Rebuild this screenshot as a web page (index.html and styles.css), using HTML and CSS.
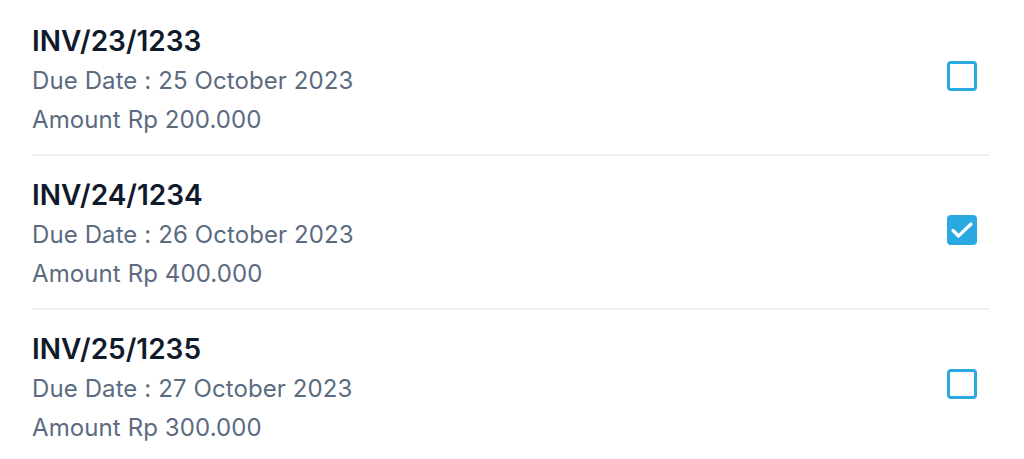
FILE: index.html
```html
<!DOCTYPE html>
<html lang="en">
<head>
    <meta charset="UTF-8">
    <meta name="viewport" content="width=device-width, initial-scale=1.0">
    <title>Invoices</title>
    <link rel="stylesheet" href="styles.css">
</head>
<body>
    <div class="invoice-list">
        <div class="invoice">
            <div class="info">
                <div class="number">INV/23/1233</div>
                <div class="detail">Due Date : 25 October 2023</div>
                <div class="detail">Amount Rp 200.000</div>
            </div>
            <span class="check"></span>
        </div>

        <div class="invoice">
            <div class="info">
                <div class="number">INV/24/1234</div>
                <div class="detail">Due Date : 26 October 2023</div>
                <div class="detail">Amount Rp 400.000</div>
            </div>
            <span class="check checked">
                <svg viewBox="0 0 30 30" width="30" height="30">
                    <path d="M6 15.5l5.5 5.5L24 9" fill="none" stroke="#fff" stroke-width="3.2" stroke-linecap="round" stroke-linejoin="round"/>
                </svg>
            </span>
        </div>

        <div class="invoice">
            <div class="info">
                <div class="number">INV/25/1235</div>
                <div class="detail">Due Date : 27 October 2023</div>
                <div class="detail">Amount Rp 300.000</div>
            </div>
            <span class="check"></span>
        </div>
    </div>
</body>
</html>
```

FILE: styles.css
```css
body {
    margin: 0;
    background: #fff;
    font-family: Inter, "Noto Sans", sans-serif;
}
.invoice-list {
    padding: 2px 34px 0 32px;
}
.invoice {
    display: flex;
    align-items: center;
    justify-content: space-between;
    padding: 20px 0 15px;
    border-bottom: 2px solid #eef1f6;
}
.invoice:last-child {
    border-bottom: none;
}
.number {
    font-size: 28px;
    font-weight: 600;
    line-height: 39px;
    color: #0f1a2b;
}
.detail {
    font-size: 24px;
    letter-spacing: 0.1px;
    line-height: 39px;
    color: #5b6b80;
}
.check {
    box-sizing: border-box;
    width: 30px;
    height: 30px;
    margin: 0 13px 10px 0;
    border: 3px solid #2aa8e2;
    border-radius: 4px;
}
.check.checked {
    border: none;
    background: #2aa8e2;
}
.check svg {
    display: block;
}
```
